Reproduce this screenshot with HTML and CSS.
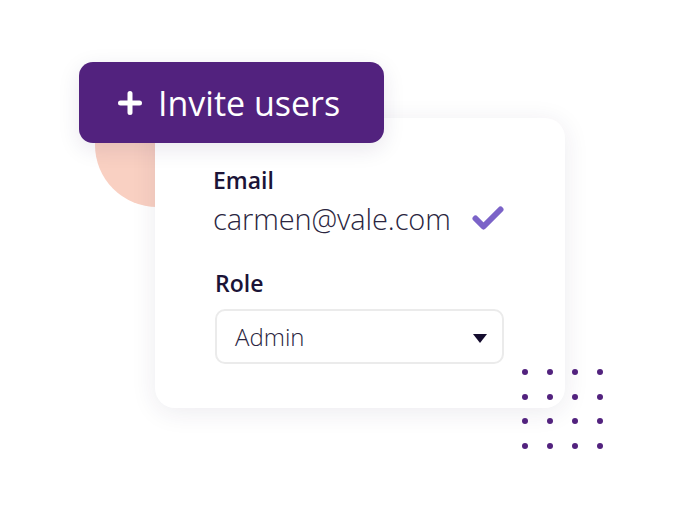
FILE: index.html
```html
<!doctype html>
<html>
  <head>
    <meta charset="utf-8">
    <title>Invite users</title>
    <meta name="viewport" content="width=device-width,initial-scale=1">
    <link rel="stylesheet" href="styles.css">
  </head>
  <body>
    <div class="scene">
      <div class="blob"></div>

      <section class="card">
        <div class="field">
          <label class="label">Email</label>
          <div class="email-row">
            <span class="value">carmen@vale.com</span>
            <svg class="check" width="32" height="26" viewBox="0 0 32 26">
              <path d="M3.5 13.5 L11.5 21.5 L28.5 4.5" fill="none" stroke="#7b63c8" stroke-width="6" stroke-linecap="round" stroke-linejoin="round"/>
            </svg>
          </div>
        </div>

        <div class="field role">
          <label class="label">Role</label>
          <div class="select">
            <span class="select-text">Admin</span>
            <span class="caret"></span>
          </div>
        </div>
      </section>

      <button class="invite" type="button">
        <svg class="plus" width="24" height="24" viewBox="0 0 24 24">
          <path d="M12 2.5 V21.5 M2.5 12 H21.5" stroke="#fff" stroke-width="5" stroke-linecap="round"/>
        </svg>
        Invite users
      </button>

      <div class="dots">
        <i></i><i></i><i></i><i></i>
        <i></i><i></i><i></i><i></i>
        <i></i><i></i><i></i><i></i>
        <i></i><i></i><i></i><i></i>
      </div>
    </div>
  </body>
</html>
```

FILE: styles.css
```css
body {
  margin: 0;
  background: #ffffff;
  font-family: "Open Sans", "Noto Sans", sans-serif;
  color: #1b1337;
}

.scene {
  position: relative;
  width: 682px;
  height: 511px;
  padding: 118px 0 0 155px;
  box-sizing: border-box;
}

/* peach circle behind the card */
.blob {
  position: absolute;
  left: 95px;
  top: 83px;
  width: 124px;
  height: 124px;
  border-radius: 50%;
  background: #f9d0c2;
}

.card {
  position: relative;
  width: 410px;
  height: 290px;
  box-sizing: border-box;
  padding: 47px 0 0 58px;
  background: #ffffff;
  border-radius: 20px;
  box-shadow: 0 4px 26px rgba(40, 30, 80, 0.09);
}

.label {
  display: block;
  font-size: 23px;
  font-weight: 600;
  line-height: 30px;
  color: #1b1337;
}

.email-row {
  display: flex;
  align-items: center;
  gap: 21px;
  margin-top: 5px;
}

.value {
  font-size: 29px;
  font-weight: 300;
  line-height: 38px;
  letter-spacing: -0.1px;
  color: #2a2540;
}

.check {
  display: block;
  margin-top: -2px;
}

.role {
  margin-top: 30px;
  margin-left: 2px;
}

.select {
  display: flex;
  align-items: center;
  justify-content: space-between;
  width: 289px;
  height: 55px;
  margin-top: 11px;
  padding: 0 15px 0 18px;
  box-sizing: border-box;
  border: 2px solid #ebebeb;
  border-radius: 10px;
}

.select-text {
  font-size: 24px;
  font-weight: 300;
  color: #2a2540;
}

.caret {
  width: 0;
  height: 0;
  border-left: 7px solid transparent;
  border-right: 7px solid transparent;
  border-top: 9px solid #150d2e;
  margin-top: 3px;
}

.invite {
  position: absolute;
  left: 79px;
  top: 62px;
  width: 305px;
  height: 81px;
  display: flex;
  align-items: center;
  gap: 16px;
  padding: 0 0 0 39px;
  box-sizing: border-box;
  border: 0;
  border-radius: 14px;
  background: #52227e;
  color: #ffffff;
  font-family: "Open Sans", "Noto Sans", sans-serif;
  font-size: 34px;
  font-weight: 500;
  box-shadow: 0 6px 22px rgba(40, 20, 80, 0.1);
}

.plus {
  display: block;
}

.dots {
  position: absolute;
  left: 522px;
  top: 369px;
  display: grid;
  grid-template-columns: repeat(4, 6px);
  grid-auto-rows: 6px;
  column-gap: 19px;
  row-gap: 18.5px;
}

.dots i {
  display: block;
  width: 6px;
  height: 6px;
  border-radius: 50%;
  background: #52227e;
}
```
